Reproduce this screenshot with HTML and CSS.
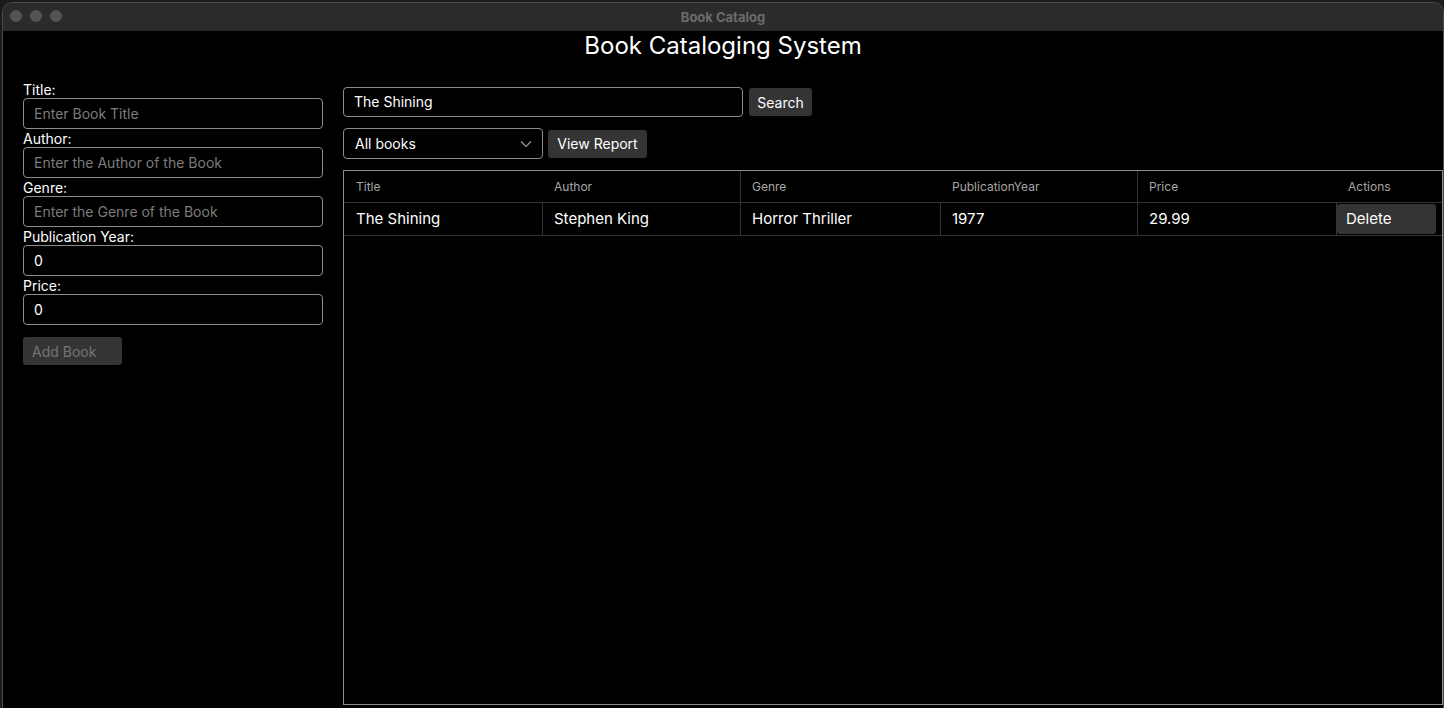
FILE: index.html
```html
<!DOCTYPE html>
<html>
<head>
<meta charset="utf-8">
<link rel="stylesheet" href="styles.css">
</head>
<body>
<div class="window">
  <div class="titlebar">
    <div class="lights"><span></span><span></span><span></span></div>
    <div class="wtitle">Book Catalog</div>
  </div>
  <div class="content">
    <h1 class="heading">Book Cataloging System</h1>
    <div class="main">
      <div class="form">
        <label class="lbl">Title:</label>
        <div class="field placeholder">Enter Book Title</div>
        <label class="lbl">Author:</label>
        <div class="field placeholder">Enter the Author of the Book</div>
        <label class="lbl">Genre:</label>
        <div class="field placeholder">Enter the Genre of the Book</div>
        <label class="lbl">Publication Year:</label>
        <div class="field">0</div>
        <label class="lbl">Price:</label>
        <div class="field">0</div>
        <button class="btn btn-disabled add">Add Book</button>
      </div>
      <div class="right">
        <div class="row">
          <div class="search">The Shining</div>
          <button class="btn btn-search">Search</button>
        </div>
        <div class="row row2">
          <div class="select">All books
            <svg class="chev" width="12" height="8" viewBox="0 0 12 8"><path d="M1 1.5 L6 6.5 L11 1.5" fill="none" stroke="#9a9a9a" stroke-width="1.2"/></svg>
          </div>
          <button class="btn btn-report">View Report</button>
        </div>
        <div class="table">
          <div class="thead">
            <div class="th">Title</div>
            <div class="th">Author</div>
            <div class="th sep">Genre</div>
            <div class="th">PublicationYear</div>
            <div class="th sep">Price</div>
            <div class="th">Actions</div>
          </div>
          <div class="trow">
            <div class="td">The Shining</div>
            <div class="td sep">Stephen King</div>
            <div class="td sep">Horror Thriller</div>
            <div class="td sep">1977</div>
            <div class="td sep">29.99</div>
            <div class="td sep act"><button class="btn del">Delete</button></div>
          </div>
        </div>
      </div>
    </div>
  </div>
</div>
</body>
</html>
```
FILE: styles.css
```css
* { box-sizing: border-box; }
html, body { margin: 0; padding: 0; }
body {
  background: #1c1c1c;
  width: 1444px;
  height: 708px;
  overflow: hidden;
  font-family: Inter, "Noto Sans", sans-serif;
  padding: 3px 1px 0 3px;
}
.window {
  height: 705px;
  background: #000;
  border-radius: 10px 10px 0 0;
  overflow: hidden;
  display: flex;
  flex-direction: column;
  box-shadow: 0 0 0 1px #4a4a4a;
}
.titlebar {
  height: 28px;
  background: #2b2b2a;
  position: relative;
  display: flex;
  align-items: center;
  justify-content: center;
}
.lights {
  position: absolute;
  left: 7px;
  top: 7px;
  display: flex;
  gap: 8px;
}
.lights span {
  width: 12px;
  height: 12px;
  border-radius: 50%;
  background: #545454;
}
.wtitle {
  color: #6c6c6c;
  font-size: 13px;
  font-weight: 700;
}
.content {
  flex: 1;
  display: flex;
  flex-direction: column;
  min-height: 0;
}
.heading {
  margin: 0;
  height: 30px;
  line-height: 30px;
  text-align: center;
  font-size: 24px;
  font-weight: 400;
  color: #fff;
}
.main {
  flex: 1;
  display: grid;
  grid-template-columns: 300px 1fr;
  column-gap: 20px;
  padding-left: 20px;
  min-height: 0;
}
.form {
  padding-top: 19px;
  display: flex;
  flex-direction: column;
}
.lbl {
  color: #fff;
  font-size: 14px;
  height: 18px;
  line-height: 20px;
}
.field {
  height: 31px;
  border: 1px solid #8c8c8c;
  border-radius: 4px;
  color: #fff;
  font-size: 14px;
  line-height: 29px;
  padding-left: 10px;
}
.field.placeholder { color: #7c7c7c; }
.btn {
  font-family: Inter, "Noto Sans", sans-serif;
  background: #343434;
  border: none;
  border-radius: 3px;
  color: #fff;
  font-size: 14px;
  padding: 0;
  cursor: default;
}
.add {
  margin-top: 12px;
  width: 99px;
  height: 28px;
  color: #747474;
  text-align: left;
  padding-left: 9px;
}
.right {
  padding-top: 26px;
  display: flex;
  flex-direction: column;
  min-height: 0;
}
.row {
  display: flex;
  align-items: center;
}
.search {
  width: 400px;
  height: 30px;
  border: 1px solid #8c8c8c;
  border-radius: 4px;
  color: #fff;
  font-size: 14px;
  line-height: 28px;
  padding-left: 10px;
}
.btn-search {
  margin-left: 6px;
  width: 63px;
  height: 28px;
}
.row2 { margin-top: 11px; }
.select {
  width: 200px;
  height: 31px;
  border: 1px solid #8c8c8c;
  border-radius: 4px;
  color: #fff;
  font-size: 14px;
  line-height: 29px;
  padding-left: 11px;
  position: relative;
}
.chev {
  position: absolute;
  right: 10px;
  top: 11px;
}
.btn-report {
  margin-left: 5px;
  width: 99px;
  height: 28px;
}
.table {
  margin-top: 11px;
  flex: 1;
  border: 1px solid #8c8c8c;
  margin-bottom: 3px;
}
.thead, .trow {
  display: grid;
  grid-template-columns: 198px 198px 200px 197px 199px 1fr;
  border-bottom: 1px solid #333;
}
.thead { height: 32px; }
.trow { height: 33px; }
.th {
  color: #a6a6a6;
  font-size: 12px;
  line-height: 31px;
  padding-left: 12px;
}
.th.sep { padding-left: 11px; }
.td {
  color: #fff;
  font-size: 15px;
  line-height: 32px;
  padding-left: 12px;
}
.td.sep { padding-left: 11px; }
.sep { border-left: 1px solid #333; }
.td.act {
  padding: 1px 6px 1px 0;
}
.del {
  width: 100%;
  height: 30px;
  font-size: 15px;
  line-height: 30px;
  text-align: left;
  padding-left: 9px;
  display: block;
}
```
